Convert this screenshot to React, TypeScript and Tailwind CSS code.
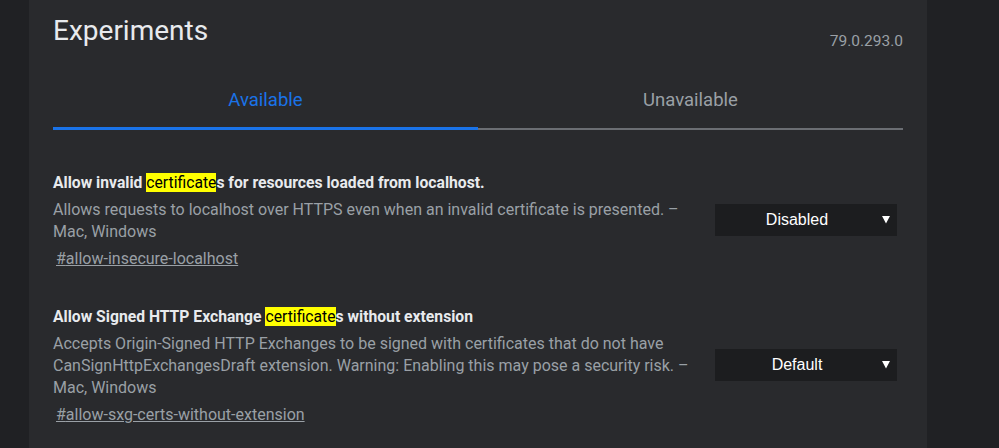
import React from 'react'

const experiments = [
  {
    id: 'allow-insecure-localhost',
    before: 'Allow invalid ',
    match: 'certificate',
    after: 's for resources loaded from localhost.',
    description:
      'Allows requests to localhost over HTTPS even when an invalid certificate is presented. – Mac, Windows',
    value: 'Disabled',
  },
  {
    id: 'allow-sxg-certs-without-extension',
    before: 'Allow Signed HTTP Exchange ',
    match: 'certificate',
    after: 's without extension',
    description:
      'Accepts Origin-Signed HTTP Exchanges to be signed with certificates that do not have CanSignHttpExchangesDraft extension. Warning: Enabling this may pose a security risk. – Mac, Windows',
    value: 'Default',
  },
]

function Dropdown({ value }: { value: string }) {
  return (
    <div className="relative flex h-[32px] w-[182px] items-center bg-[#1c1d1f] pr-[18px] text-white">
      <span className="flex-1 text-center text-[16px] font-['Liberation_Sans',Arial,sans-serif]">
        {value}
      </span>
      <svg
        className="absolute right-[7px] top-[12px]"
        width="8"
        height="8"
        viewBox="0 0 8 8"
      >
        <polygon points="0,0 8,0 4,7.5" fill="#ffffff" />
      </svg>
    </div>
  )
}

export default function App() {
  return (
    <div className="flex h-[448px] w-[999px] overflow-hidden bg-[#202124] font-['Roboto',sans-serif]">
      <div className="w-[29px] shrink-0" />
      <div className="w-[898px] shrink-0 bg-[#292a2d] px-[24px]">
        <div className="flex h-[48px] items-start justify-between pt-[14px]">
          <h1 className="text-[28px] leading-[34px] text-[#e8eaed]">Experiments</h1>
          <span className="pt-[17px] text-[15.5px] leading-[20px] text-[#9aa0a6]">79.0.293.0</span>
        </div>

        <div className="mt-[40px] flex items-end">
          <div className="w-1/2 border-b-[3px] border-[#1a73e8] pb-[15px] text-center text-[18.5px] leading-[24px] text-[#1a73e8]">
            Available
          </div>
          <div className="w-1/2 border-b-2 border-[#6b6e73] pb-[16px] text-center text-[18.5px] leading-[24px] text-[#9aa0a6]">
            Unavailable
          </div>
        </div>

        <div className="mt-[43px] flex flex-col gap-[37px]">
          {experiments.map((exp) => (
            <div key={exp.id} className="flex items-center">
              <div className="w-[650px] shrink-0">
                <h2 className="text-[15.7px] font-bold leading-[20px] text-[#e8eaed]">
                  {exp.before}
                  <mark className="bg-[#ffff00] text-black font-normal">{exp.match}</mark>
                  {exp.after}
                </h2>
                <p className="mt-[6px] text-[16px] leading-[22px] text-[#9aa0a6]">
                  {exp.description}
                </p>
                <a
                  href={'#' + exp.id}
                  className="mt-[5px] ml-[3px] block text-[16px] leading-[22px] text-[#9aa0a6] underline"
                >
                  #{exp.id}
                </a>
              </div>
              <div className="mb-[4px] ml-[12px]">
                <Dropdown value={exp.value} />
              </div>
            </div>
          ))}
        </div>
      </div>
    </div>
  )
}
